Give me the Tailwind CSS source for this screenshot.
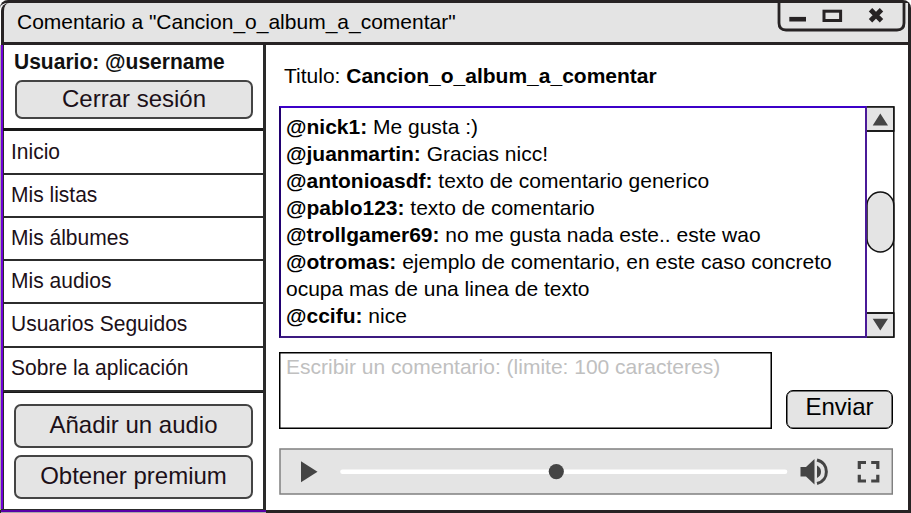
<!DOCTYPE html>
<html lang="es">
<head>
<meta charset="utf-8">
<title>Comentario</title>
<script src="https://cdn.jsdelivr.net/npm/@tailwindcss/browser@4"></script>
</head>
<body class="w-[911px] h-[513px] overflow-hidden bg-white text-black text-[21px] font-['Liberation_Sans',Arial,sans-serif]">
<div class="relative w-[911px] h-[513px] flex flex-col border-[3px] border-l-0 border-[#272324] rounded-t-lg">
  <header class="relative ml-px h-[42px] shrink-0 border-b-[3px] border-l-[3px] border-[#272324] bg-[#e4e4e4] rounded-tl-lg flex items-center pl-[13px] pb-px">
    <h1 class="whitespace-nowrap">Comentario a "Cancion_o_album_a_comentar"</h1>
    <svg class="absolute right-0 top-[-3px]" width="133" height="34" viewBox="775 0 133 34" fill="none" stroke="#272324">
      <path d="M779 2V23Q779 30 786 30H897Q904 30 904 23V2" stroke-width="2.800"/>
      <path d="M789.300 19.200H806" stroke-width="4.600"/>
      <rect x="824" y="11.200" width="16.600" height="9.300" stroke-width="3"/>
      <path d="M870.500 9.700L881.500 20.700M881.500 9.700L870.500 20.700" stroke-width="4.800"/>
    </svg>
  </header>
  <div class="flex flex-1 min-h-0">
    <aside class="w-[265px] ml-px shrink-0 flex flex-col border-l-2 border-l-[#7000d8] border-r-[3px] border-r-[#2a2a2a] text-[#1c1018] shadow-[inset_1px_0_0_#2c2c2c,-1px_0_0_#aaa]">
      <section class="h-[86px] shrink-0 border-b-[3px] border-[#181818] pl-[12px]">
        <p class="-ml-px font-bold text-[22px] leading-[24px] pt-[5px] origin-left scale-x-[.955] whitespace-nowrap text-[#111]">Usuario: @username</p>
        <button class="mt-[6px] w-[238px] h-[39px] rounded-[7px] border-2 border-[#444] bg-[#e4e4e4] text-[24px] leading-[33px] pb-[2px] block">Cerrar sesión</button>
      </section>
      <nav class="flex flex-col text-[22px] *:border-b-2 *:border-[#2c2c2c] *:pl-[8px] *:pb-[2px] *:flex *:items-center">
        <a class="h-[44px]"><span class="origin-left scale-x-[.955]">Inicio</span></a>
        <a class="h-[43px]"><span class="origin-left scale-x-[.955]">Mis listas</span></a>
        <a class="h-[43px]"><span class="origin-left scale-x-[.955]">Mis álbumes</span></a>
        <a class="h-[43px] !pb-[3px]"><span class="origin-left scale-x-[.955]">Mis audios</span></a>
        <a class="h-[44px] !pb-[3px]"><span class="origin-left scale-x-[.955]">Usuarios Seguidos</span></a>
        <a class="h-[44px] !pb-[3px]"><span class="origin-left scale-x-[.955]">Sobre la aplicación</span></a>
      </nav>
      <section class="flex-1 pl-[11px] pt-[11px] flex flex-col gap-[7px] border-t border-[#181818]">
        <button class="w-[239px] h-[44px] rounded-[7px] border-2 border-[#444] bg-[#e4e4e4] text-[24px] leading-[38px] pb-[2px] block">Añadir un audio</button>
        <button class="w-[239px] h-[44px] rounded-[7px] border-2 border-[#444] bg-[#e4e4e4] text-[24px] leading-[38px] pb-[2px] block">Obtener premium</button>
      </section>
    </aside>
    <main class="flex-1 pl-[13px] pt-[17px]">
      <h2 class="pl-[5px] leading-[27px] whitespace-nowrap">Titulo: <b>Cancion_o_album_a_comentar</b></h2>
      <div class="mt-[17px] flex w-[616px] h-[232px]">
        <div class="w-[588px] border-2 border-t-[#3c00c8] border-l-[#200070] border-r-[#4a1a98] border-b-[#3c1a80] pl-[5px] pt-[5px] leading-[27px] whitespace-nowrap">
          <p><b>@nick1:</b> Me gusta :)</p>
          <p><b>@juanmartin:</b> Gracias nicc!</p>
          <p><b>@antonioasdf:</b> texto de comentario generico</p>
          <p><b>@pablo123:</b> texto de comentario</p>
          <p><b>@trollgamer69:</b> no me gusta nada este.. este wao</p>
          <p><b>@otromas:</b> ejemplo de comentario, en este caso concreto<br>ocupa mas de una linea de texto</p>
          <p><b>@ccifu:</b> nice</p>
        </div>
        <svg width="28" height="232" viewBox="867 106 28 232" fill="#e4e4e4" stroke="#111" stroke-width="1.500">
          <path d="M866 107H893.800V337H866" fill="#fff"/>
          <path d="M866 107H893.800V131H866M866 313H893.800V337H866"/>
          <path d="M866 131H894M866 313H894"/>
          <rect x="867" y="192" width="26.800" height="60" rx="13.400"/>
          <path d="M880.300 113.500L888 125.500H872.700ZM880.300 330.500L888 318.700H872.700Z" fill="#444" stroke="none"/>
        </svg>
      </div>
      <div class="mt-[14px] flex items-end">
        <div class="w-[493px] h-[77px] border-[1.500px] border-black shadow-[inset_0_0_0_.5px_#000] pl-[6px] leading-[27px] text-[#c0c0c0] whitespace-nowrap">Escribir un comentario: (limite: 100 caracteres)</div>
        <button class="ml-[14px] w-[107px] h-[39px] rounded-[7px] border-[1.500px] border-black shadow-[inset_0_0_0_.5px_#000] bg-[#e4e4e4] text-[24px] leading-[32px] pb-[5px]">Enviar</button>
      </div>
      <svg class="mt-[19px] block" width="614" height="47" viewBox="279 448 614 47" fill="#444">
        <rect x="280" y="449" width="612.300" height="45" fill="#e4e4e4" stroke="#808080" stroke-width="1.500"/>
        <path d="M301 461.200V482.200L317.500 471.700Z"/>
        <path d="M342.500 471.700H785" stroke="#fff" stroke-width="4.600" stroke-linecap="round"/>
        <circle cx="556.300" cy="471.600" r="7.600"/>
        <path d="M800.500 467H806L814.500 459V484.500L806 476.500H800.500ZM817 465.500Q821 467.500 821 471.700T817 478Z"/>
        <path d="M817 460C829.500 463 829.500 480.500 817 483.500" fill="none" stroke="#444" stroke-width="3"/>
        <path d="M859.300 469V462.500H866M871.200 462.500H877.800V469M877.800 474.700V481H871.200M866 481H859.300V474.700" fill="none" stroke="#444" stroke-width="3.200"/>
      </svg>
    </main>
  </div>
  <div class="absolute left-px -bottom-[3px] w-[265px] h-[4px] border-t border-b border-t-[#2c2c2c] border-b-[#aaa] bg-[#5a00a8]"></div>
</div>
</body>
</html>
